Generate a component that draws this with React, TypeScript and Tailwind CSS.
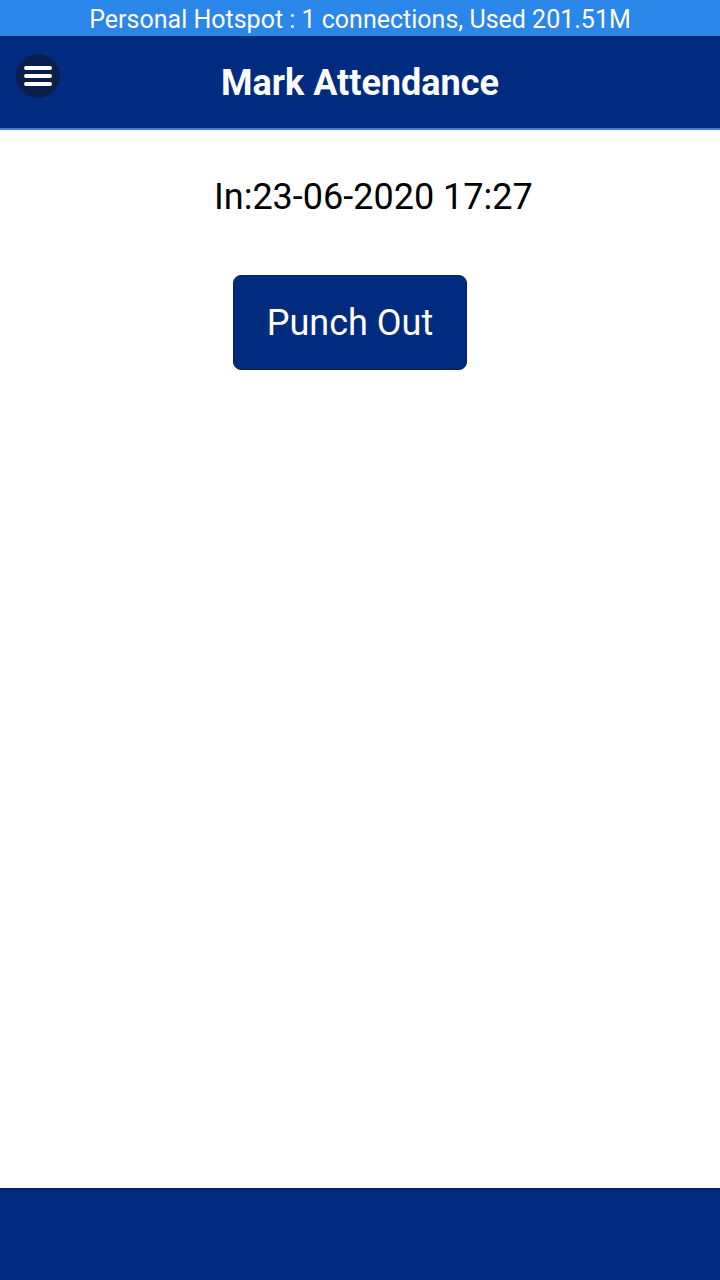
export default function App() {
  return (
    <div className="w-[720px] h-[1280px] flex flex-col bg-white font-['Roboto',sans-serif]">
      <div className="h-[36px] pt-[2px] bg-[#2a86e8] flex items-center justify-center text-white text-[25px] leading-none">
        Personal Hotspot : 1 connections, Used 201.51M
      </div>

      <header className="relative h-[94px] bg-[#002b7f] border-b-2 border-[#3b7fd1] flex items-center justify-center">
        <button className="absolute left-[16px] top-[18px] w-[44px] h-[44px] rounded-full bg-[#0b1f4e] flex flex-col items-center justify-center gap-[4px]">
          <span className="block w-[28px] h-[4px] rounded-full bg-white" />
          <span className="block w-[28px] h-[4px] rounded-full bg-white" />
          <span className="block w-[28px] h-[4px] rounded-full bg-white" />
        </button>
        <h1 className="pt-[2px] text-white text-[36px] font-bold leading-none">Mark Attendance</h1>
      </header>

      <main className="flex-1 flex flex-col">
        <div className="pt-[49px] pl-[214px] text-[36px] leading-none text-black">In:23-06-2020 17:27</div>
        <div className="mt-[60px] pl-[233px]">
          <button className="w-[234px] h-[95px] rounded-[8px] bg-[#002b7f] border border-[#0a1f5c] text-white text-[36px] leading-none">
            Punch Out
          </button>
        </div>
      </main>

      <footer className="h-[92px] bg-[#002b7f] border-t-2 border-[#0a2366]" />
    </div>
  )
}
